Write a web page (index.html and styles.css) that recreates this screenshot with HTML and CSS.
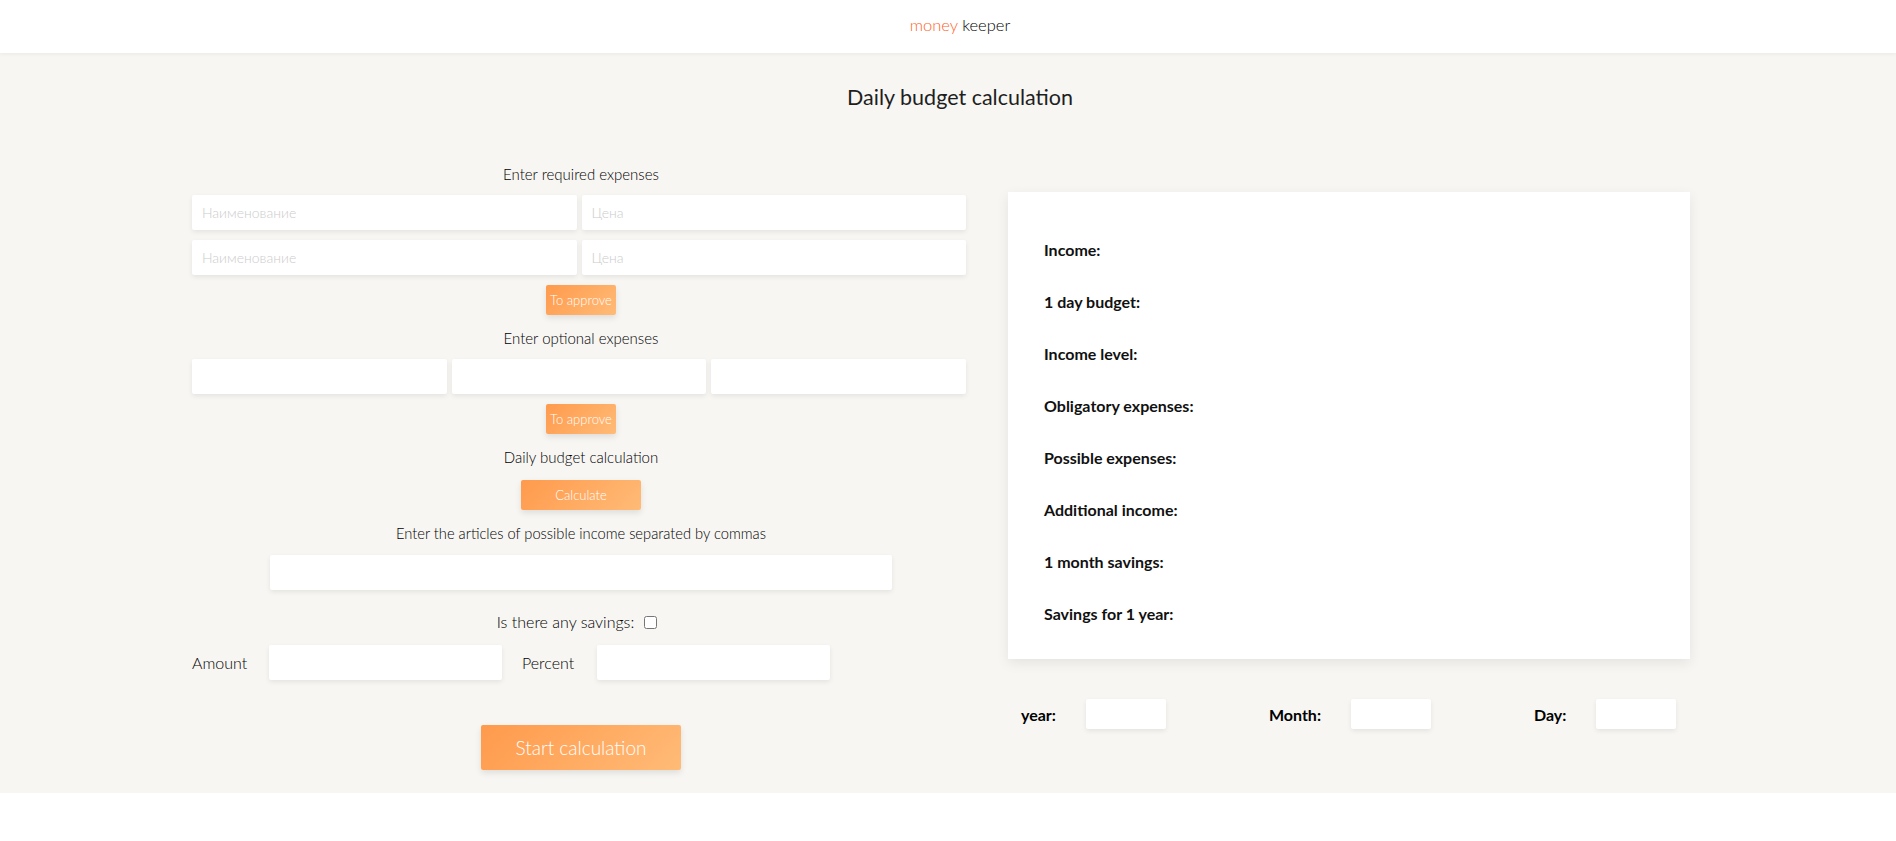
FILE: index.html
```html
<!DOCTYPE html>
<html lang="en">
<head>
<meta charset="utf-8">
<title>money keeper</title>
<link rel="stylesheet" href="styles.css">
</head>
<body>
<header class="header">
  <div class="logo"><span class="logo-accent">money</span> keeper</div>
</header>
<main class="main">
  <h1 class="title">Daily budget calculation</h1>
  <div class="row">
    <section class="left">
      <div class="caption">Enter required expenses</div>
      <div class="pair">
        <input class="field" type="text" placeholder="Наименование">
        <input class="field" type="text" placeholder="Цена">
      </div>
      <div class="pair pair-second">
        <input class="field" type="text" placeholder="Наименование">
        <input class="field" type="text" placeholder="Цена">
      </div>
      <button class="btn btn-small">To approve</button>

      <div class="caption">Enter optional expenses</div>
      <div class="triple">
        <input class="field" type="text">
        <input class="field" type="text">
        <input class="field" type="text">
      </div>
      <button class="btn btn-small">To approve</button>

      <div class="caption">Daily budget calculation</div>
      <button class="btn btn-calc">Calculate</button>

      <div class="caption caption-long">Enter the articles of possible income separated by commas</div>
      <input class="field field-wide" type="text">

      <label class="savings">Is there any savings: <input class="check" type="checkbox"></label>

      <div class="amount-row">
        <span class="amount-label">Amount</span>
        <input class="field field-mid" type="text">
        <span class="percent-label">Percent</span>
        <input class="field field-mid" type="text">
      </div>

      <button class="btn btn-start">Start calculation</button>
    </section>

    <section class="right">
      <div class="card">
        <div class="result">Income:</div>
        <div class="result">1 day budget:</div>
        <div class="result">Income level:</div>
        <div class="result">Obligatory expenses:</div>
        <div class="result">Possible expenses:</div>
        <div class="result">Additional income:</div>
        <div class="result">1 month savings:</div>
        <div class="result">Savings for 1 year:</div>
      </div>
      <div class="date-row">
        <span class="date-label">year:</span>
        <input class="field field-date" type="text">
        <span class="date-label">Month:</span>
        <input class="field field-date" type="text">
        <span class="date-label">Day:</span>
        <input class="field field-date" type="text">
      </div>
    </section>
  </div>
</main>
</body>
</html>
```

FILE: styles.css
```css
* {
  box-sizing: border-box;
}

body {
  margin: 0;
  background: #ffffff;
  font-family: "Lato", "Open Sans", "Liberation Sans", sans-serif;
  color: #000000;
}

.header {
  height: 53px;
  background: #ffffff;
  display: flex;
  align-items: center;
  justify-content: center;
  position: relative;
  z-index: 1;
  box-shadow: 0 1px 4px rgba(0, 0, 0, 0.06);
}

.logo {
  font-size: 16.5px;
  font-weight: 300;
  color: #000000;
  margin-left: 24px;
  margin-top: -4px;
}

.logo-accent {
  color: #ff5f1f;
}

.main {
  background: #f7f6f3;
  height: 740px;
  padding-top: 31px;
}

.title {
  margin: 0;
  text-align: center;
  font-size: 21.5px;
  line-height: 26px;
  font-weight: 400;
  color: #1e1e1e;
  padding-left: 24px;
}

.row {
  display: flex;
  align-items: flex-start;
  margin-top: 54px;
  padding-left: 192px;
  gap: 42px;
}

.left {
  width: 774px;
  display: flex;
  flex-direction: column;
  align-items: center;
}

.caption {
  font-size: 15px;
  font-weight: 300;
  line-height: 20px;
  color: #000000;
  margin-bottom: 11px;
  padding-left: 4px;
}

.caption-long {
  font-size: 14.7px;
}

.field {
  height: 35px;
  border: none;
  border-radius: 2px;
  background: #ffffff;
  box-shadow: 0 2px 5px rgba(0, 0, 0, 0.08);
  padding: 0 10px;
  font-family: inherit;
  font-size: 14px;
  font-weight: 300;
  outline: none;
}

.field::placeholder {
  color: #cccccc;
}

.pair {
  width: 100%;
  display: grid;
  grid-template-columns: 1fr 1fr;
  gap: 5px;
}

.pair-second {
  margin-top: 10px;
}

.triple {
  width: 100%;
  display: grid;
  grid-template-columns: 1fr 1fr 1fr;
  gap: 5px;
}

.btn {
  border: none;
  border-radius: 2px;
  color: #ffffff;
  font-family: inherit;
  font-weight: 300;
  background: linear-gradient(135deg, #ff9a4c 0%, #ffbb77 100%);
  box-shadow: 0 3px 6px rgba(0, 0, 0, 0.1);
  cursor: pointer;
  padding: 0;
  margin-left: 4px;
}

.btn-small {
  width: 70px;
  height: 30px;
  font-size: 13px;
  margin-top: 10px;
  margin-bottom: 13px;
}

.btn-calc {
  width: 120px;
  height: 30px;
  font-size: 13px;
  margin-top: 2px;
  margin-bottom: 13px;
}

.btn-start {
  width: 200px;
  height: 45px;
  font-size: 19px;
  margin-top: 45px;
}

.field-wide {
  width: 622px;
  margin-top: 1px;
  margin-left: 4px;
}

.savings {
  margin-top: 22px;
  font-size: 16px;
  font-weight: 300;
  line-height: 20px;
  display: flex;
  align-items: center;
  gap: 10px;
  margin-right: 4px;
}

.check {
  width: 13px;
  height: 13px;
  margin: 0;
}

.amount-row {
  width: 100%;
  display: flex;
  align-items: center;
  margin-top: 13px;
}

.amount-label,
.percent-label {
  font-size: 16px;
  font-weight: 300;
}

.amount-label {
  width: 77px;
}

.percent-label {
  margin-left: 20px;
  width: 75px;
}

.field-mid {
  width: 233px;
}

.right {
  width: 682px;
  margin-top: 28px;
}

.card {
  background: #ffffff;
  box-shadow: 0 4px 12px rgba(0, 0, 0, 0.08);
  padding: 32px 36px 19px;
}

.result {
  height: 52px;
  line-height: 52px;
  font-size: 16px;
  font-weight: 700;
  color: #111111;
}

.date-row {
  display: flex;
  align-items: center;
  margin-top: 40px;
  padding-left: 13px;
}

.date-label {
  font-size: 16px;
  font-weight: 700;
  margin-right: 30px;
}

.field-date {
  width: 80px;
  height: 30px;
  margin-right: 103px;
}

.field-date:last-child {
  margin-right: 0;
}
```
